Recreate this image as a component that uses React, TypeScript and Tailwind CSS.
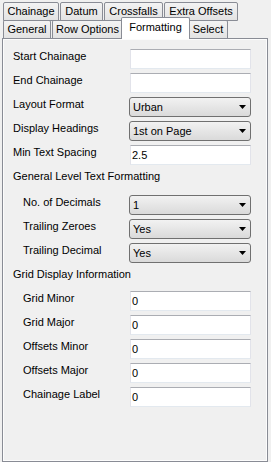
import React from "react";

const Tab = ({ label, w, active, top }: { label: string; w: string; active?: boolean; top?: boolean }) => {
  if (active) {
    return (
      <div
        className={`${w} relative z-10 -mx-[2px] -mt-[3px] h-[22px] border border-b-0 border-[#898c95] bg-white flex items-start justify-center pt-[3px] rounded-t-[2px]`}
      >
        {label}
      </div>
    );
  }
  return (
    <div
      className={`${w} ${top ? "h-[19px] border" : "h-[18px] border border-b-0"} border-[#898c95] bg-linear-to-b from-[#f3f3f3] to-[#e3e3e3] flex items-center justify-center rounded-t-[2px]`}
    >
      {label}
    </div>
  );
};

const TextBox = ({ value }: { value?: string }) => (
  <div className="ml-[1px] w-[121px] h-[20px] bg-white border border-[#e2e3ea] border-t-[#abadb3] border-b-[#e3e9ef] flex items-center pl-[1px]">
    {value}
  </div>
);

const Select = ({ value }: { value: string }) => (
  <div className="w-[122px] h-[20px] border border-[#707070] rounded-[3px] bg-linear-to-b from-[#f2f2f2] to-[#dadada] flex items-center justify-between pl-[3px] pr-[4px]">
    <span className="pt-[1px]">{value}</span>
    <svg width="7" height="4" viewBox="0 0 7 4">
      <path d="M0 0H7L3.5 4Z" fill="#000" />
    </svg>
  </div>
);

const Row = ({
  label,
  indent,
  children,
}: {
  label: string;
  indent?: boolean;
  children: React.ReactNode;
}) => (
  <div className="flex h-[24px] items-start">
    <div className={`w-[116px] pt-[1px] whitespace-nowrap ${indent ? "pl-[10px]" : ""}`}>{label}</div>
    {children}
  </div>
);

export default function App() {
  return (
    <div className="w-[271px] h-[465px] bg-white font-['Liberation_Sans',Arial,sans-serif] text-[11px] leading-[13px] text-black">
      <div className="h-[462px] bg-[#f0f0f0] flex flex-col">
        {/* back tab row */}
        <div className="flex gap-[1px] pl-[3px] pt-[2px]">
          <Tab label="Chainage" w="w-[56px]" top />
          <Tab label="Datum" w="w-[43px]" top />
          <Tab label="Crossfalls" w="w-[59px]" top />
          <Tab label="Extra Offsets" w="w-[74px]" top />
        </div>
        {/* front tab row */}
        <div className="flex items-start h-[18px] -mt-[1px] pl-[3px] relative z-10">
          <Tab label="General" w="w-[48px]" />
          <div className="w-[1px]" />
          <Tab label="Row Options" w="w-[71px]" />
          <Tab label="Formatting" w="w-[69px]" active />
          <Tab label="Select" w="w-[40px]" />
        </div>

        {/* panel */}
        <div className="ml-[2px] w-[266px] flex-1 border border-[#898c95] bg-[#f0f0f0] shadow-[inset_0_0_0_1px_#fcfcfc] pt-[10px] pl-[10px]">
          <Row label="Start Chainage">
            <TextBox />
          </Row>
          <Row label="End Chainage">
            <TextBox />
          </Row>
          <Row label="Layout Format">
            <Select value="Urban" />
          </Row>
          <Row label="Display Headings">
            <Select value="1st on Page" />
          </Row>
          <Row label="Min Text Spacing">
            <TextBox value="2.5" />
          </Row>
          <div className="h-[26px] pt-[1px]">General Level Text Formatting</div>
          <Row label="No. of Decimals" indent>
            <Select value="1" />
          </Row>
          <Row label="Trailing Zeroes" indent>
            <Select value="Yes" />
          </Row>
          <Row label="Trailing Decimal" indent>
            <Select value="Yes" />
          </Row>
          <div className="h-[24px] pt-[1px]">Grid Display Information</div>
          <Row label="Grid Minor" indent>
            <TextBox value="0" />
          </Row>
          <Row label="Grid Major" indent>
            <TextBox value="0" />
          </Row>
          <Row label="Offsets Minor" indent>
            <TextBox value="0" />
          </Row>
          <Row label="Offsets Major" indent>
            <TextBox value="0" />
          </Row>
          <Row label="Chainage Label" indent>
            <TextBox value="0" />
          </Row>
        </div>
      </div>
    </div>
  );
}
